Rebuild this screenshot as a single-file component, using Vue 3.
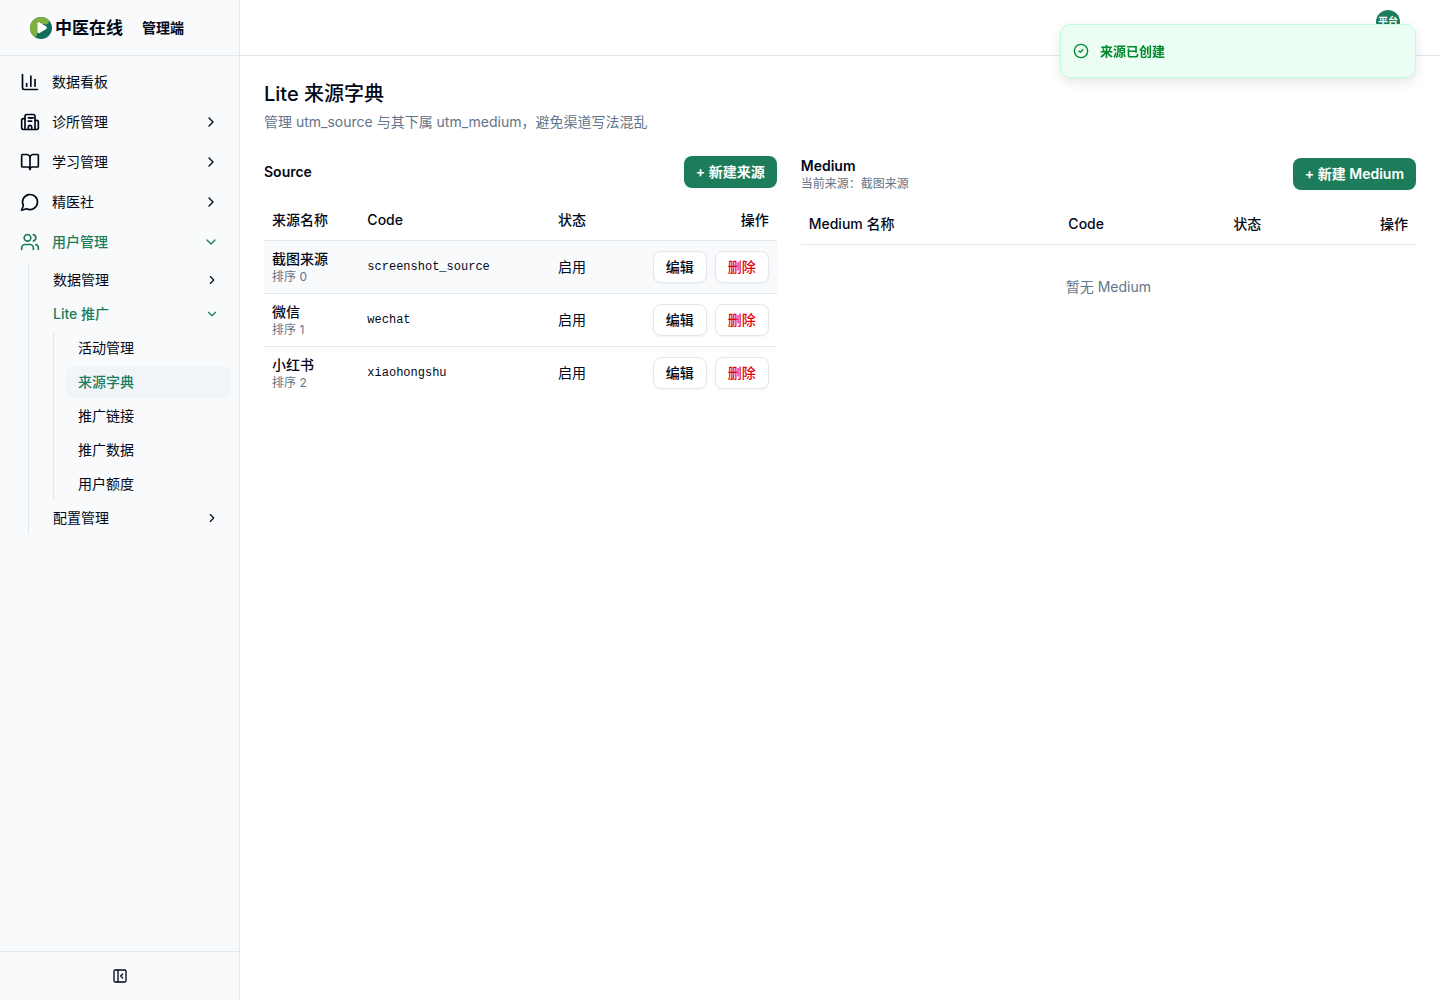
<script setup>
import { ref } from 'vue'

const navItems = [
  { name: '数据看板', icon: 'chart' },
  { name: '诊所管理', icon: 'hospital', expandable: true },
  { name: '学习管理', icon: 'book', expandable: true },
  { name: '精医社', icon: 'message', expandable: true },
  {
    name: '用户管理',
    icon: 'users',
    expandable: true,
    open: true,
    children: [
      { name: '数据管理' },
      {
        name: 'Lite 推广',
        open: true,
        children: ['活动管理', '来源字典', '推广链接', '推广数据', '用户额度']
      },
      { name: '配置管理' }
    ]
  }
]

// lucide style icons, 24x24 viewBox
const icons = {
  chart: ['M3 3v16a2 2 0 0 0 2 2h16', 'M18 17V9', 'M13 17V5', 'M8 17v-3'],
  hospital: [
    'M12 7h4',
    'M10 11h4',
    'M10 7h4',
    'M14 21v-3a2 2 0 0 0-4 0v3',
    'M18 10h2a2 2 0 0 1 2 2v7a2 2 0 0 1-2 2H4a2 2 0 0 1-2-2v-9a2 2 0 0 1 2-2h2',
    'M6 21V5a2 2 0 0 1 2-2h8a2 2 0 0 1 2 2v16'
  ],
  book: [
    'M12 7v14',
    'M3 18a1 1 0 0 1-1-1V4a1 1 0 0 1 1-1h5a4 4 0 0 1 4 4 4 4 0 0 1 4-4h5a1 1 0 0 1 1 1v13a1 1 0 0 1-1 1h-6a3 3 0 0 0-3 3 3 3 0 0 0-3-3z'
  ],
  message: ['M7.9 20A9 9 0 1 0 4 16.1L2 22Z'],
  users: [
    'M16 21v-2a4 4 0 0 0-4-4H6a4 4 0 0 0-4 4v2',
    'M13 7a4 4 0 1 1-8 0 4 4 0 0 1 8 0',
    'M22 21v-2a4 4 0 0 0-3-3.87',
    'M16 3.13a4 4 0 0 1 0 7.75'
  ]
}

const chevron = (open) => (open ? 'm6 9 6 6 6-6' : 'm9 18 6-6-6-6')

const activePage = '来源字典'

const sources = ref([
  { name: '截图来源', code: 'screenshot_source', sort: 0, status: '启用' },
  { name: '微信', code: 'wechat', sort: 1, status: '启用' },
  { name: '小红书', code: 'xiaohongshu', sort: 2, status: '启用' }
])

const selected = ref('screenshot_source')
</script>

<template>
  <div class="layout">
    <aside class="sidebar">
      <div class="brand">
        <svg class="brand-logo" viewBox="0 0 22 22">
          <circle cx="11" cy="11" r="11" fill="#126e5a" />
          <path d="M11 0A11 11 0 0 0 5 20.2C7 19 7.4 17 7.4 14V6.500L17 7.500C19 6 19 4 18.600 3A11 11 0 0 0 11 0Z" fill="#7fb041" />
          <path d="M7.400 6.600c0-1.300 1-1.800 2.100-1.200l6.700 4.100c1 .6 1 1.800 0 2.400l-6.700 4.100c-1.100.6-2.100.1-2.100-1.200Z" fill="#fff" />
        </svg>
        <span class="brand-name">中医在线</span>
        <span class="brand-sub">管理端</span>
      </div>

      <nav class="nav">
        <template v-for="item in navItems" :key="item.name">
          <button class="nav-item" :class="{ active: item.open }">
            <svg class="icon icon-lg" viewBox="0 0 24 24">
              <path v-for="d in icons[item.icon]" :key="d" :d="d" />
            </svg>
            <span class="nav-label">{{ item.name }}</span>
            <svg v-if="item.expandable" class="icon icon-md" viewBox="0 0 24 24">
              <path :d="chevron(item.open)" />
            </svg>
          </button>

          <div v-if="item.children" class="nav-group">
            <template v-for="child in item.children" :key="child.name">
              <button class="nav-sub" :class="{ active: child.open }">
                <span class="nav-label">{{ child.name }}</span>
                <svg class="icon icon-sm" viewBox="0 0 24 24">
                  <path :d="chevron(child.open)" />
                </svg>
              </button>
              <div v-if="child.children" class="nav-leaves">
                <a
                  v-for="leaf in child.children"
                  :key="leaf"
                  href="#"
                  class="nav-sub"
                  :class="{ current: leaf === activePage }"
                >{{ leaf }}</a>
              </div>
            </template>
          </div>
        </template>
      </nav>

      <div class="sidebar-footer">
        <button class="btn-collapse" aria-label="收起菜单">
          <svg class="icon icon-md" viewBox="0 0 24 24">
            <rect x="3" y="3" width="18" height="18" rx="2" />
            <path d="M9 3v18" />
            <path d="m16 15-3-3 3-3" />
          </svg>
        </button>
      </div>
    </aside>

    <div class="main">
      <header class="topbar">
        <span class="avatar">平台</span>
      </header>

      <main class="content">
        <h1>Lite 来源字典</h1>
        <p class="subtitle">管理 utm_source 与其下属 utm_medium，避免渠道写法混乱</p>

        <div class="panels">
          <section>
            <div class="panel-head">
              <h2>Source</h2>
              <button class="btn btn-primary">+ 新建来源</button>
            </div>
            <table class="source-table">
              <thead>
                <tr>
                  <th class="col-name">来源名称</th>
                  <th class="col-code">Code</th>
                  <th class="col-status">状态</th>
                  <th class="right">操作</th>
                </tr>
              </thead>
              <tbody>
                <tr
                  v-for="source in sources"
                  :key="source.code"
                  :class="{ selected: source.code === selected }"
                  @click="selected = source.code"
                >
                  <td>
                    <div class="source-name">{{ source.name }}</div>
                    <div class="hint">排序 {{ source.sort }}</div>
                  </td>
                  <td class="code">{{ source.code }}</td>
                  <td>{{ source.status }}</td>
                  <td>
                    <div class="actions">
                      <button class="btn btn-outline">编辑</button>
                      <button class="btn btn-outline danger">删除</button>
                    </div>
                  </td>
                </tr>
              </tbody>
            </table>
          </section>

          <section>
            <div class="panel-head">
              <div>
                <h2>Medium</h2>
                <div class="hint">当前来源：截图来源</div>
              </div>
              <button class="btn btn-primary">+ 新建 Medium</button>
            </div>
            <table class="medium-table">
              <thead>
                <tr>
                  <th class="col-name">Medium 名称</th>
                  <th class="col-code">Code</th>
                  <th class="col-status">状态</th>
                  <th class="right">操作</th>
                </tr>
              </thead>
              <tbody>
                <tr>
                  <td colspan="4" class="empty">暂无 Medium</td>
                </tr>
              </tbody>
            </table>
          </section>
        </div>
      </main>
    </div>

    <div class="toast" role="status">
      <svg class="icon icon-md" viewBox="0 0 24 24">
        <circle cx="12" cy="12" r="10" />
        <path d="m9 12 2 2 4-4" />
      </svg>
      <span>来源已创建</span>
    </div>
  </div>
</template>

<style>
body {
  margin: 0;
  background: #fff;
}
</style>

<style scoped>
.layout {
  display: flex;
  min-height: 100vh;
  color: #020817;
  font-family: Inter, "Noto Sans CJK SC", sans-serif;
  font-size: 14px;
  line-height: 20px;
}

.layout * {
  box-sizing: border-box;
}

button {
  font: inherit;
  color: inherit;
  border: none;
  background: none;
  cursor: pointer;
}

.icon {
  flex-shrink: 0;
  fill: none;
  stroke: currentColor;
  stroke-width: 2;
  stroke-linecap: round;
  stroke-linejoin: round;
}

.icon-lg {
  width: 20px;
  height: 20px;
}

.icon-md {
  width: 16px;
  height: 16px;
}

.icon-sm {
  width: 14px;
  height: 14px;
}

/* Sidebar */
.sidebar {
  display: flex;
  flex-direction: column;
  flex-shrink: 0;
  box-sizing: border-box;
  width: 240px;
  background: #f8fafc;
  border-right: 1px solid #e2e8f0;
}

.brand {
  display: flex;
  align-items: center;
  height: 56px;
  padding-left: 30px;
  border-bottom: 1px solid #e2e8f0;
}

.brand-logo {
  width: 22px;
  height: 22px;
  margin-right: 3px;
}

.brand-name {
  font-size: 17px;
  font-weight: 600;
}

.brand-sub {
  margin-left: 19px;
  font-weight: 600;
}

.nav {
  display: flex;
  flex-direction: column;
  flex: 1;
  gap: 4px;
  padding: 8px;
}

.nav-item {
  display: flex;
  align-items: center;
  gap: 12px;
  height: 36px;
  padding: 0 12px;
  border-radius: 8px;
}

.nav-label {
  flex: 1;
  text-align: left;
}

.nav-group {
  display: flex;
  flex-direction: column;
  gap: 2px;
  margin-left: 20px;
  padding-left: 12px;
  border-left: 1px solid #e2e8f0;
}

.nav-sub {
  display: flex;
  align-items: center;
  height: 32px;
  padding: 0 12px;
  border-radius: 8px;
  color: inherit;
  text-decoration: none;
}

.nav-leaves {
  display: flex;
  flex-direction: column;
  gap: 2px;
  margin-left: 12px;
  padding-left: 12px;
  border-left: 1px solid #e2e8f0;
}

.active,
.current {
  color: #1d7d5a;
  font-weight: 500;
}

.current {
  background: #f1f5f9;
}

.sidebar-footer {
  display: flex;
  align-items: center;
  justify-content: center;
  height: 49px;
  border-top: 1px solid #e2e8f0;
}

.btn-collapse {
  display: flex;
  padding: 8px;
}

/* Main area */
.main {
  flex: 1;
  min-width: 0;
}

.topbar {
  display: flex;
  justify-content: flex-end;
  height: 56px;
  padding: 10px 40px;
  border-bottom: 1px solid #e2e8f0;
}

.avatar {
  width: 24px;
  height: 24px;
  border-radius: 50%;
  background: #1d7d5a;
  color: #fff;
  font-size: 10px;
  font-weight: 600;
  line-height: 22px;
  text-align: center;
}

.content {
  padding: 24px;
}

h1 {
  margin: 0;
  font-size: 20px;
  font-weight: 500;
  line-height: 28px;
}

.subtitle {
  margin: 4px 0 24px;
  color: #64748b;
}

.panels {
  display: grid;
  grid-template-columns: 5fr 6fr;
  gap: 24px;
}

.panel-head {
  display: flex;
  align-items: center;
  justify-content: space-between;
  margin-bottom: 12px;
}

h2 {
  margin: 0;
  font-size: 14px;
  font-weight: 600;
  line-height: 20px;
}

.hint {
  color: #64748b;
  font-size: 12px;
  line-height: 16px;
}

.btn {
  height: 32px;
  padding: 0 12px;
  border-radius: 8px;
  font-weight: 500;
}

.btn-primary {
  background: #1d7d5a;
  color: #fff;
  font-weight: 600;
}

.btn-outline {
  background: #fff;
  border: 1px solid #e2e8f0;
  box-shadow: 0 1px 2px rgba(0, 0, 0, 0.05);
}

.danger {
  color: #e7000b;
}

table {
  width: 100%;
  border-collapse: collapse;
  table-layout: fixed;
}

.source-table .col-name {
  width: 18.6%;
}

.source-table .col-code {
  width: 37.2%;
}

.medium-table .col-name {
  width: 42.2%;
}

.medium-table .col-code {
  width: 26.8%;
}

.col-status {
  width: 15%;
}

th {
  height: 40px;
  padding: 0 8px;
  font-weight: 500;
  text-align: left;
}

.right {
  text-align: right;
}

td {
  padding: 8px;
}

thead tr,
tbody tr:not(:last-child) {
  border-bottom: 1px solid #e2e8f0;
}

.selected {
  background: #f8fafc;
}

.source-name {
  font-weight: 500;
}

.code {
  font-family: "Courier New", "Liberation Mono", monospace;
  font-size: 12px;
}

.actions {
  display: flex;
  justify-content: flex-end;
  gap: 8px;
}

.empty {
  padding: 32px 8px;
  color: #64748b;
  text-align: center;
}

/* Toast */
.toast {
  position: fixed;
  top: 24px;
  right: 24px;
  display: flex;
  align-items: center;
  gap: 11px;
  width: 356px;
  height: 54px;
  padding: 0 12px;
  border: 1px solid #bffcd9;
  border-radius: 10px;
  background: #ecfdf3;
  box-shadow: 0 4px 12px rgba(0, 0, 0, 0.1);
  color: #008a2e;
  font-size: 13px;
  font-weight: 600;
}
</style>
